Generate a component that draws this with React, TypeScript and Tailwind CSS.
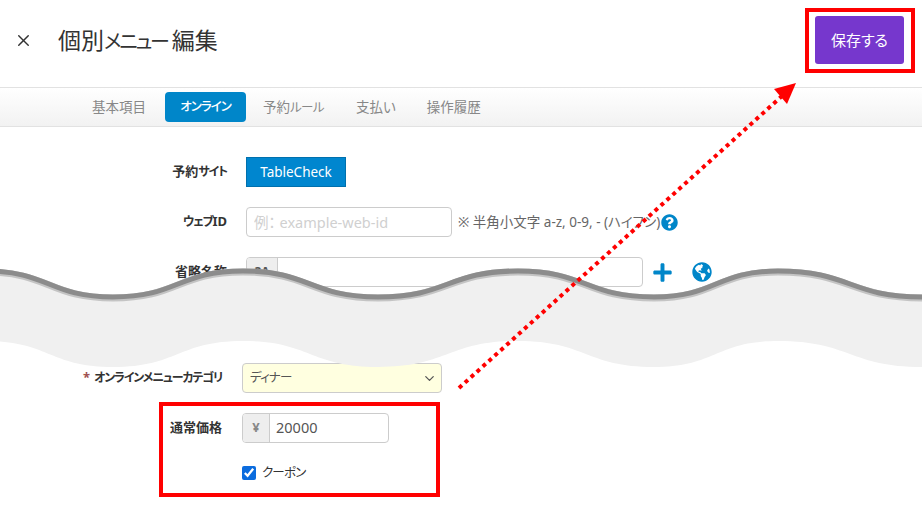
import type { ReactNode } from "react";
import { ChevronDown, X } from "lucide-react";
import { FaGlobeAmericas, FaPlus, FaQuestionCircle } from "react-icons/fa";

const waveTop =
  "M-15 271 C49 271 49 297 113 297 C178 297 178 271 243 271 C310 271 310 297 378 297 C448 297 448 271 518 271 C586 271 586 297 654 297 C716 297 716 271 778 271 C850 271 850 297 922 297";

function Annotations() {
  return (
    <svg className="absolute left-0 top-0 h-[521px] w-[922px]" viewBox="0 0 922 521">
      {/* torn page */}
      <path
        d={`${waveTop} L922 367 C850 367 850 341 778 341 C716 341 716 367 654 367 C586 367 586 341 518 341 C448 341 448 367 378 367 C310 367 310 341 243 341 C178 341 178 367 113 367 C49 367 49 341 -15 341 Z`}
        fill="#f0f0f0"
      />
      <path d={waveTop} fill="none" stroke="#c4c4c4" strokeWidth="7" transform="translate(0 1)" />
      <path d={waveTop} fill="none" stroke="#8c8c8c" strokeWidth="5" />
      {/* arrow */}
      <line x1="459" y1="388" x2="782" y2="96" stroke="#ff0000" strokeWidth="4" strokeDasharray="4 4" />
      <polygon points="796,83 774,89 787,104" fill="#ff0000" />
      {/* highlight boxes */}
      <rect x="807" y="10" width="106" height="61" fill="none" stroke="#ff0000" strokeWidth="4" />
      <rect x="161" y="404" width="277" height="91" fill="none" stroke="#ff0000" strokeWidth="4" />
    </svg>
  );
}

// kana runs are narrow in the original font
function Kana({ children }: { children: ReactNode }) {
  return <span className="text-[12px] tracking-[-1.2px]">{children}</span>;
}

function App() {
  return (
    <div className="relative h-[521px] w-[922px] overflow-hidden bg-white font-['Noto_Sans','Noto_Sans_CJK_JP',sans-serif] text-[#333] [font-feature-settings:'palt']">
      <header className="flex h-[87px] items-center pb-[7px] pl-[14px] pr-[18px]">
        <X size={19} strokeWidth={1.8} className="text-[#333]" />
        <h1 className="ml-[25px] text-[23px] font-normal text-[#333]">
          個別<span className="text-[20px] tracking-[-2.2px]">メニュー</span>
          <span className="ml-[4px]">編集</span>
        </h1>
        <button className="ml-auto h-12 w-[89px] rounded-[3px] bg-[#7637cd] text-[15px] text-white">保存する</button>
      </header>

      <nav className="flex h-10 items-center border-y border-[#e2e2e2] bg-gradient-to-b from-white to-[#f2f2f2] pl-[92px] text-[13.5px] text-[#888]">
        <span>基本項目</span>
        <span className="ml-[19px] flex h-[30px] w-[81px] items-center justify-center rounded-[4px] bg-[#0086c9] font-medium text-white">
          <span className="text-[12.5px] tracking-[-1px]">オンライン</span>
        </span>
        <span className="ml-[17px]">
          予約<span className="text-[12.5px] tracking-[-0.6px]">ルール</span>
        </span>
        <span className="ml-[32px]">支払い</span>
        <span className="ml-[31px]">操作履歴</span>
      </nav>

      <section className="mt-[30px] flex flex-col gap-5">
        <div className="flex h-[30px] items-center">
          <label className="w-[227px] text-right text-[13px] font-bold">
            予約<Kana>サイト</Kana>
          </label>
          <span className="ml-[19px] flex h-[30px] w-[100px] items-center justify-center border border-[#0070ad] bg-[#0086cf] text-[13.5px] text-white">
            TableCheck
          </span>
        </div>
        <div className="flex h-[30px] items-center">
          <label className="w-[227px] text-right text-[13px] font-bold">
            <Kana>ウェブ</Kana>ID
          </label>
          <input
            placeholder="例： example-web-id"
            className="ml-[19px] h-[30px] w-[206px] rounded-[4px] border border-[#ccc] px-[7px] text-[14.5px] placeholder:text-[#d0d0d0]"
          />
          <span className="ml-[6px] text-[13.5px] text-[#666]">※ 半角小文字 a-z, 0-9, - (ハイフン)</span>
          <FaQuestionCircle className="ml-[1px] text-[#0086c9]" size={17} />
        </div>
        <div className="flex h-[30px] items-center">
          <label className="w-[227px] text-right text-[13px] font-bold">省略名称</label>
          <div className="ml-[19px] flex h-[30px] w-[397px] overflow-hidden rounded-[4px] border border-[#ccc]">
            <span className="flex w-[31px] items-center justify-center border-r border-[#ccc] bg-[#eee] text-[12px] font-bold text-[#555]">3A</span>
            <input className="min-w-0 flex-1" />
          </div>
          <FaPlus className="ml-[9px] text-[#0086c9]" size={21} />
          <FaGlobeAmericas className="ml-[19px] text-[#0086c9]" size={20} />
        </div>
      </section>

      <section className="mt-[76px] flex flex-col gap-5">
        <div className="flex h-[30px] items-center">
          <label className="w-[222px] text-right text-[13px] font-bold">
            <span className="mr-1 text-[#a05050]">*</span>
            <Kana>オンラインメニューカテゴリ</Kana>
          </label>
          <div className="relative ml-5 w-[200px]">
            <select className="h-[30px] w-full appearance-none rounded-[4px] border border-[#ccc] bg-[#ffffe0] px-[7px] text-[12.5px] tracking-[-0.8px] text-[#555]">
              <option>ディナー</option>
            </select>
            <ChevronDown size={15} className="absolute right-[5px] top-2 text-[#555]" />
          </div>
        </div>
        <div className="flex h-[30px] items-center">
          <label className="w-[222px] text-right text-[13px] font-bold">通常価格</label>
          <div className="ml-5 flex h-[30px] w-[147px] overflow-hidden rounded-[4px] border border-[#ccc]">
            <span className="flex w-[27px] items-center justify-center border-r border-[#ccc] bg-[#eee] text-[13px] font-bold text-[#888]">¥</span>
            <input defaultValue="20000" className="w-0 flex-1 px-[6px] text-[14.5px] text-[#555]" />
          </div>
        </div>
        <div className="flex h-[20px] items-center pl-[242px]">
          <input type="checkbox" defaultChecked className="h-[14px] w-[14px] accent-[#0b6cde]" />
          <span className="ml-[6px] text-[12.5px] tracking-[-0.8px] text-[#333]">クーポン</span>
        </div>
      </section>

      <Annotations />
    </div>
  );
}

export default App;
